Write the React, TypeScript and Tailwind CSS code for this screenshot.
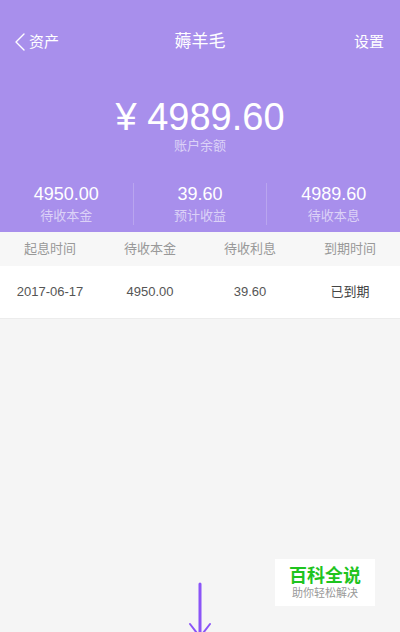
const font = "font-['Liberation_Sans','Noto_Sans_CJK_SC',sans-serif]";

const stats = [
  { value: "4950.00", label: "待收本金" },
  { value: "39.60", label: "预计收益" },
  { value: "4989.60", label: "待收本息" },
];

const headers = ["起息时间", "待收本金", "待收利息", "到期时间"];
const row = ["2017-06-17", "4950.00", "39.60", "已到期"];

export default function App() {
  return (
    <div className={`relative h-[632px] w-[400px] overflow-hidden bg-[#f5f5f5] ${font}`}>
      <div className="bg-[#a88fec] pt-[20px] text-white">
        {/* nav */}
        <div className="relative flex h-[44px] items-center justify-between px-[14px]">
          <div className="flex items-center gap-[4px]">
            <svg width="11" height="18" viewBox="0 0 11 18" fill="none">
              <path d="M10 1L2 9l8 8" stroke="white" strokeWidth="1.4" strokeLinecap="round" strokeLinejoin="round" />
            </svg>
            <span className="text-[15px]">资产</span>
          </div>
          <span className="absolute left-1/2 -translate-x-1/2 text-[17px]">薅羊毛</span>
          <span className="pr-[2px] text-[15px]">设置</span>
        </div>

        {/* balance */}
        <div className="mt-[34px] flex flex-col items-center">
          <div className="text-[38px] leading-[38px]">¥ 4989.60</div>
          <div className="mt-[2px] text-[13px] leading-[16px] text-white/60">账户余额</div>
        </div>

        {/* stats */}
        <div className="mt-[29px] flex pb-[7px]">
          {stats.map((s, i) => (
            <div
              key={s.label}
              className={`flex flex-1 flex-col items-center ${i > 0 ? "border-l border-white/20" : ""}`}
            >
              <div className="text-[18px] leading-[22px]">{s.value}</div>
              <div className="mt-[2px] text-[13px] leading-[18px] text-white/60">{s.label}</div>
            </div>
          ))}
        </div>
      </div>

      {/* table */}
      <div className="grid h-[34px] grid-cols-4 items-center bg-[#f7f7f7] text-[13px] text-[#999]">
        {headers.map((h) => (
          <div key={h} className="text-center">{h}</div>
        ))}
      </div>
      <div className="grid h-[53px] grid-cols-4 items-center border-b border-[#ececec] bg-white text-[13px] text-[#555]">
        {row.map((c, i) => (
          <div key={i} className={`text-center ${i === 3 ? "text-[#444]" : ""}`}>{c}</div>
        ))}
      </div>

      {/* watermark */}
      <div className="absolute left-[275px] top-[559px] flex h-[47px] w-[100px] flex-col items-center justify-center bg-white">
        <div className="text-[18px] font-bold leading-[20px] text-[#1fc41f]">百科全说</div>
        <div className="mt-[1px] text-[11px] leading-[13px] text-[#999]">助你轻松解决</div>
      </div>

      {/* arrow annotation */}
      <svg className="absolute left-[186px] top-[580px]" width="28" height="60" viewBox="0 0 28 60" fill="none">
        <path d="M14 4V58" stroke="#8b55f7" strokeWidth="3" strokeLinecap="round" />
        <path d="M4 44L14 57L24 44" stroke="#8b55f7" strokeWidth="2" strokeLinecap="round" />
      </svg>
    </div>
  );
}
